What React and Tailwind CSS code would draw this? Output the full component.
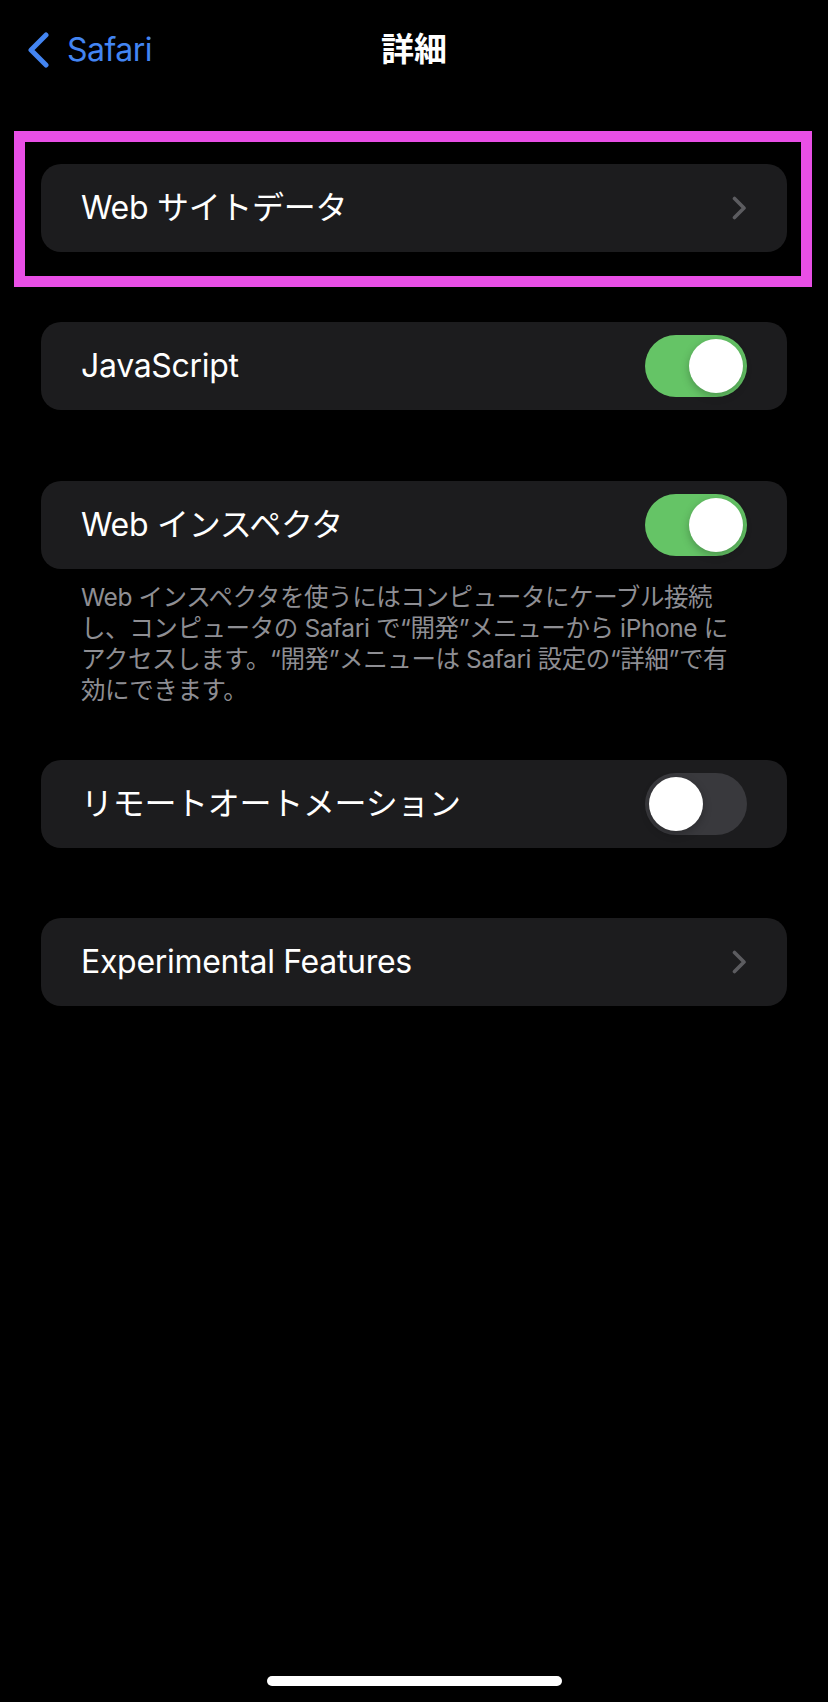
import React, { useState } from "react";

const font = "font-['Inter','Noto_Sans_CJK_JP',sans-serif]";

function Chevron() {
  return (
    <svg width="15" height="24" viewBox="0 0 15 24" fill="none">
      <path
        d="M2.5 2.5 L12 12 L2.5 21.5"
        stroke="#5c5c60"
        strokeWidth="3.6"
        strokeLinecap="round"
        strokeLinejoin="round"
      />
    </svg>
  );
}

function Toggle({ on, onChange }) {
  return (
    <button
      onClick={onChange}
      className={`flex h-[62px] w-[102px] shrink-0 items-center rounded-full p-[4px] ${
        on ? "justify-end bg-[#65c466]" : "justify-start bg-[#39393d]"
      }`}
    >
      <span className="block h-[54px] w-[54px] rounded-full bg-white shadow-[0_3px_8px_rgba(0,0,0,0.25)]" />
    </button>
  );
}

function Row({ label, children }) {
  return (
    <div className="mx-[41px] flex h-[88px] items-center justify-between rounded-[20px] bg-[#1c1c1e] pl-[40px] pr-[40px]">
      <span className="text-[32px] tracking-[-0.3px] text-white">{label}</span>
      {children}
    </div>
  );
}

export default function App() {
  const [js, setJs] = useState(true);
  const [inspector, setInspector] = useState(true);
  const [remote, setRemote] = useState(false);

  return (
    <div className={`flex h-[1702px] w-[828px] flex-col bg-black ${font}`}>
      {/* Nav bar */}
      <div className="grid h-[100px] grid-cols-[1fr_auto_1fr] items-center">
        <div className="flex items-center pl-[27px]">
          <svg width="22" height="36" viewBox="0 0 22 36" fill="none">
            <path
              d="M19 3 L4 18 L19 33"
              stroke="#4385f2"
              strokeWidth="5"
              strokeLinecap="round"
              strokeLinejoin="round"
            />
          </svg>
          <span className="ml-[18px] text-[32px] tracking-[-0.5px] text-[#4385f2]">Safari</span>
        </div>
        <h1 className="text-[33px] font-semibold text-white">詳細</h1>
        <div />
      </div>

      {/* Website data (highlighted) */}
      <div className="relative mt-[64px]">
        <Row label="Web サイトデータ">
          <Chevron />
        </Row>
        <div className="pointer-events-none absolute -top-[33px] -bottom-[35px] left-[14px] right-[16px] border-[11px] border-[#e94fe6]" />
      </div>

      <div className="mt-[70px]">
        <Row label="JavaScript">
          <Toggle on={js} onChange={() => setJs(!js)} />
        </Row>
      </div>

      <div className="mt-[71px]">
        <Row label="Web インスペクタ">
          <Toggle on={inspector} onChange={() => setInspector(!inspector)} />
        </Row>
      </div>

      <p className="ml-[81px] mt-[13px] whitespace-nowrap text-[24.5px] leading-[31px] tracking-[-0.4px] text-[#8e8e93]">
        Web インスペクタを使うにはコンピュータにケーブル接続
        <br />
        し、コンピュータの Safari で“開発”メニューから iPhone に
        <br />
        アクセスします。“開発”メニューは Safari 設定の“詳細”で有
        <br />
        効にできます。
      </p>

      <div className="mt-[54px]">
        <Row label="リモートオートメーション">
          <Toggle on={remote} onChange={() => setRemote(!remote)} />
        </Row>
      </div>

      <div className="mt-[70px]">
        <Row label="Experimental Features">
          <Chevron />
        </Row>
      </div>

      {/* Home indicator */}
      <div className="mt-auto flex justify-center pb-[16px]">
        <div className="h-[10px] w-[295px] rounded-full bg-white" />
      </div>
    </div>
  );
}
